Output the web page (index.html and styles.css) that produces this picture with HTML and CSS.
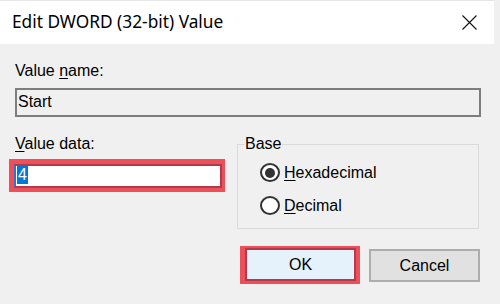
FILE: index.html
```html
<!DOCTYPE html>
<html>
<head>
<meta charset="utf-8">
<link rel="stylesheet" href="styles.css">
</head>
<body>
<div class="dialog">
  <div class="titlebar">
    <span class="title">Edit DWORD (32-bit) Value</span>
    <svg class="close" width="15" height="15" viewBox="0 0 15 15"><path d="M0.5 0.5L14.5 14.5M14.5 0.5L0.5 14.5" stroke="#111" stroke-width="1.1" fill="none"/></svg>
  </div>
  <div class="content">
    <div class="label">Value <u>n</u>ame:</div>
    <div class="namebox">Start</div>
    <div class="row">
      <div class="left">
        <div class="label"><u>V</u>alue data:</div>
        <div class="hl hl-input"><div class="input"><span class="sel">4</span></div></div>
      </div>
      <fieldset class="base">
        <legend>Base</legend>
        <div class="radio"><span class="dot checked"></span><span class="rtext"><u>H</u>exadecimal</span></div>
        <div class="radio"><span class="dot"></span><span class="rtext"><u>D</u>ecimal</span></div>
      </fieldset>
    </div>
    <div class="buttons">
      <div class="hl hl-btn"><div class="btn ok">OK</div></div>
      <div class="btn cancel">Cancel</div>
    </div>
  </div>
</div>
</body>
</html>
```
FILE: styles.css
```css
html, body {
  margin: 0;
  padding: 0;
  background: #f0f0f0;
}
.dialog {
  width: 500px;
  height: 304px;
  font-family: "Liberation Sans", Arial, sans-serif;
  font-size: 16px;
  line-height: 18px;
  color: #000;
}
.titlebar {
  box-sizing: border-box;
  height: 44px;
  margin-right: 6px;
  background: #fff;
  border-top: 1px solid #e6e6e6;
  display: flex;
  align-items: flex-start;
  padding-top: 9px;
}
.title {
  font-family: "Noto Sans", sans-serif;
  font-size: 17.3px;
  line-height: 24px;
  padding-left: 12px;
  color: #000;
}
.close {
  margin-left: auto;
  margin-right: 17px;
  margin-top: 5px;
  display: block;
}
.content {
  padding: 0 20px 0 15px;
}
.content > .label {
  margin-top: 18px;
}
.label u, .rtext u {
  text-underline-offset: 2px;
}
.namebox {
  box-sizing: border-box;
  margin-top: 8px;
  margin-right: -1px;
  height: 29px;
  border: 2px solid #7d7d7d;
  background: #f0f0f0;
  padding: 3px 1px 0;
}
.row {
  display: grid;
  grid-template-columns: 1fr 243px;
  margin-top: 18px;
}
.left {
  display: flex;
  flex-direction: column;
  align-items: flex-start;
}
.hl {
  background: #ef4f59;
}
.hl-input {
  margin-top: 6px;
  margin-left: -6px;
  padding: 5px 3px 4px 5px;
}
.input {
  box-sizing: border-box;
  width: 208px;
  height: 24px;
  border: 2px solid #b3394c;
  border-left-color: #3a6fc0;
  background: #fff;
  padding: 0 0 0 1px;
}
.sel {
  display: inline-block;
  background: #0078d7;
  color: #fff;
  padding: 0 1px;
  line-height: 19px;
  margin-top: -1px;
}
.base {
  margin: 0 1px 0 0;
  padding: 10px 0 13px 22px;
  border: 1px solid #dadada;
  min-width: 0;
}
.base legend {
  margin-left: -16px;
  padding: 0 1px;
}
.radio {
  display: flex;
  align-items: center;
  height: 19px;
  gap: 4px;
}
.radio + .radio {
  margin-top: 14px;
}
.dot {
  box-sizing: border-box;
  width: 20px;
  height: 19px;
  border: 2px solid #333;
  border-radius: 50%;
  background: #fff;
  display: flex;
  align-items: center;
  justify-content: center;
}
.dot.checked::after {
  content: "";
  width: 10px;
  height: 10px;
  border-radius: 50%;
  background: #333;
}
.buttons {
  display: flex;
  justify-content: flex-end;
  align-items: center;
  gap: 9px;
  margin-top: 17px;
}
.hl-btn {
  padding: 2px 4px 3px 5px;
}
.btn {
  box-sizing: border-box;
  width: 111px;
  height: 33px;
  display: flex;
  align-items: center;
  justify-content: center;
  padding-top: 1px;
}
.ok {
  background: #e5f1fb;
  border: 2px solid #b3394c;
}
.cancel {
  background: #e1e1e1;
  border: 2px solid #adadad;
}
```
